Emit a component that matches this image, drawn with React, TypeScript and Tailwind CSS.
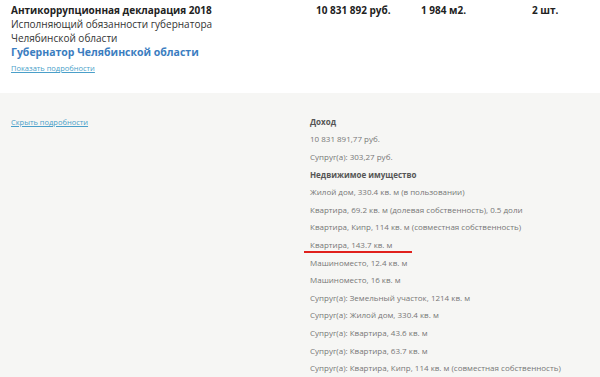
import React from "react";

const items: { text: string; bold?: boolean; mark?: boolean }[] = [
  { text: "Доход", bold: true },
  { text: "10 831 891,77 руб." },
  { text: "Супруг(а): 303,27 руб." },
  { text: "Недвижимое имущество", bold: true },
  { text: "Жилой дом, 330.4 кв. м (в пользовании)" },
  { text: "Квартира, 69.2 кв. м (долевая собственность), 0.5 доли" },
  { text: "Квартира, Кипр, 114 кв. м (совместная собственность)" },
  { text: "Квартира, 143.7 кв. м", mark: true },
  { text: "Машиноместо, 12.4 кв. м" },
  { text: "Машиноместо, 16 кв. м" },
  { text: "Супруг(а): Земельный участок, 1214 кв. м" },
  { text: "Супруг(а): Жилой дом, 330.4 кв. м" },
  { text: "Супруг(а): Квартира, 43.6 кв. м" },
  { text: "Супруг(а): Квартира, 63.7 кв. м" },
  { text: "Супруг(а): Квартира, Кипр, 114 кв. м (совместная собственность)" },
];

export default function App() {
  return (
    <div
      className="w-[600px] h-[377px] overflow-hidden bg-white"
      style={{ fontFamily: '"Open Sans", sans-serif' }}
    >
      <div className="h-[93px] flex pl-[11px] pt-[3px]">
        <div className="w-[305px]">
          <div className="text-[10px] leading-[14px] font-bold text-[#222]">
            Антикоррупционная декларация 2018
          </div>
          <div className="text-[10px] leading-[14px] text-[#333]">
            Исполняющий обязанности губернатора
            <br />
            Челябинской области
          </div>
          <div className="text-[10.5px] leading-[14px] font-bold text-[#3b7dc0]">
            Губернатор Челябинской области
          </div>
          <a className="block mt-[4px] text-[7.5px] leading-[10px] text-[#4a9fc9] underline">
            Показать подробности
          </a>
        </div>
        <div className="flex text-[10px] leading-[14px] font-bold text-[#222]">
          <span className="w-[105px]">10 831 892 руб.</span>
          <span className="w-[111px]">1 984 м2.</span>
          <span>2 шт.</span>
        </div>
      </div>
      <div className="h-[284px] bg-[#f6f6f4] flex pt-[20px]">
        <div className="w-[310px] pl-[11px] pt-[4px]">
          <a className="block text-[7.5px] leading-[10px] text-[#4a9fc9] underline">
            Скрыть подробности
          </a>
        </div>
        <div className="flex flex-col">
          {items.map((it, i) => (
            <div
              key={i}
              className={
                "h-[17.64px] flex items-center text-[8px] leading-[12px] whitespace-nowrap " +
                (it.bold ? "font-bold text-[#555]" : "text-[#777]")
              }
            >
              <span className="relative">
                {it.text}
                {it.mark && (
                  <span className="absolute left-[-6px] w-[108px] top-[12px] h-[2px] bg-[#e0201c]" />
                )}
              </span>
            </div>
          ))}
        </div>
      </div>
    </div>
  );
}
